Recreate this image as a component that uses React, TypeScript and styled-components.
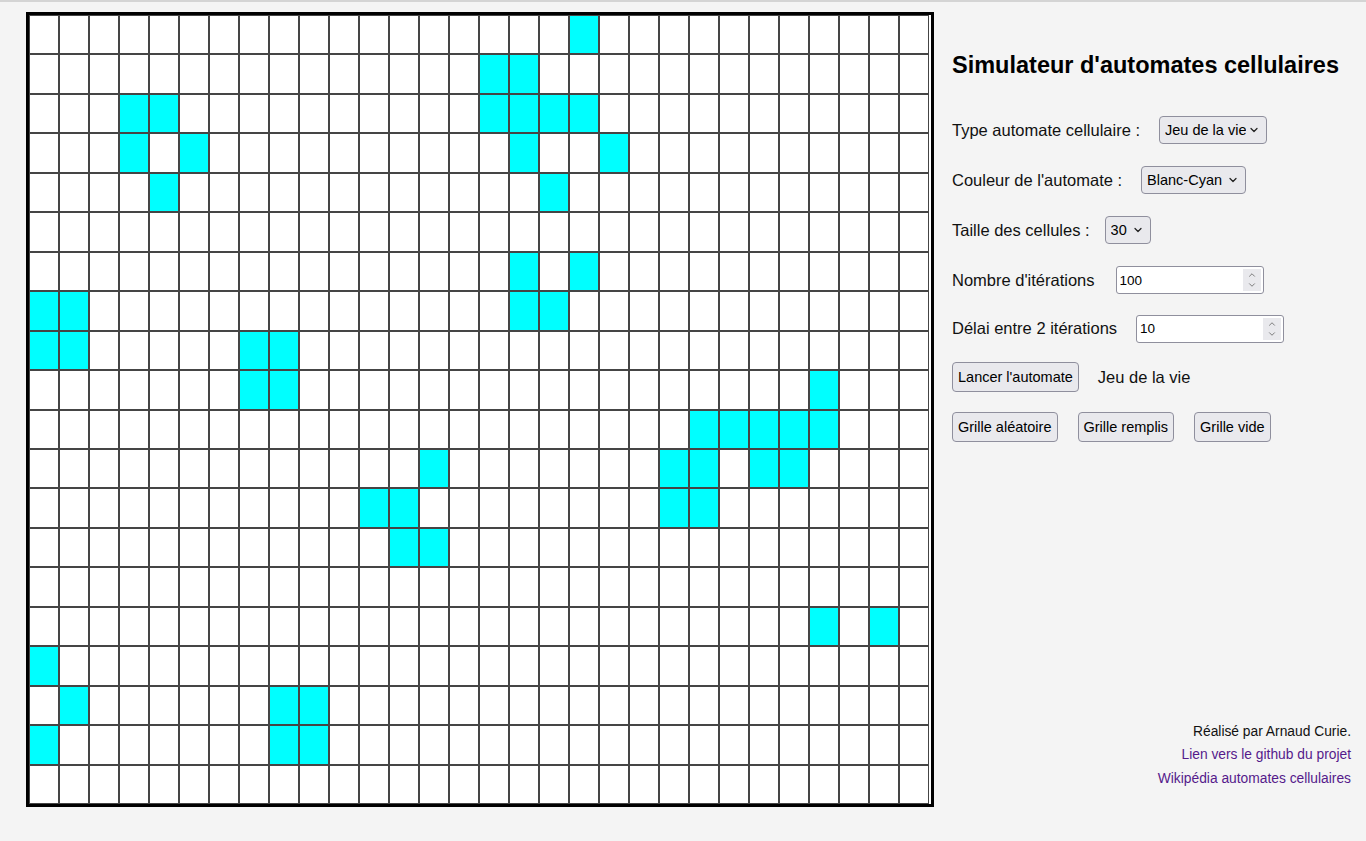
import React from "react";
import styled, { createGlobalStyle } from "styled-components";
import { ChevronDown, ChevronUp } from "lucide-react";

const ROWS = 20;
const COLS = 30;

const alive: [number, number][] = [
  [0, 18],
  [1, 15], [1, 16],
  [2, 3], [2, 4], [2, 15], [2, 16], [2, 17], [2, 18],
  [3, 3], [3, 5], [3, 16], [3, 19],
  [4, 4], [4, 17],
  [6, 16], [6, 18],
  [7, 0], [7, 1], [7, 16], [7, 17],
  [8, 0], [8, 1], [8, 7], [8, 8],
  [9, 7], [9, 8], [9, 26],
  [10, 22], [10, 23], [10, 24], [10, 25], [10, 26],
  [11, 13], [11, 21], [11, 22], [11, 24], [11, 25],
  [12, 11], [12, 12], [12, 21], [12, 22],
  [13, 12], [13, 13],
  [15, 26], [15, 28],
  [16, 0],
  [17, 1], [17, 8], [17, 9],
  [18, 0], [18, 8], [18, 9],
];

const aliveSet = new Set(alive.map(([r, c]) => `${r}-${c}`));

const GlobalStyle = createGlobalStyle`
  html, body {
    margin: 0;
    background: #f4f4f4;
  }
  body {
    border-top: 2px solid #d4d4d4;
    font-family: "Liberation Sans", Arial, sans-serif;
    color: #111;
  }
`;

const App = () => {
  const cells = [];
  for (let r = 0; r < ROWS; r++) {
    for (let c = 0; c < COLS; c++) {
      cells.push(<Cell key={`${r}-${c}`} $alive={aliveSet.has(`${r}-${c}`)} />);
    }
  }

  return (
    <>
      <GlobalStyle />
      <Page>
        <Board>{cells}</Board>
        <Panel>
          <Title>Simulateur d'automates cellulaires</Title>
          <Row>
            <Label>Type automate cellulaire :</Label>
            <SelectWrap>
              <Select defaultValue="vie" $width={108}>
                <option value="vie">Jeu de la vie</option>
              </Select>
              <Chevron size={12} strokeWidth={2.5} />
            </SelectWrap>
          </Row>
          <Row>
            <Label>Couleur de l'automate :</Label>
            <SelectWrap>
              <Select defaultValue="bc" $width={105}>
                <option value="bc">Blanc-Cyan</option>
              </Select>
              <Chevron size={12} strokeWidth={2.5} />
            </SelectWrap>
          </Row>
          <Row $gap={15}>
            <Label>Taille des cellules :</Label>
            <SelectWrap>
              <Select defaultValue="30" $width={46}>
                <option value="30">30</option>
              </Select>
              <Chevron size={12} strokeWidth={2.5} />
            </SelectWrap>
          </Row>
          <Row $gap={21}>
            <Label>Nombre d'itérations</Label>
            <NumberWrap>
              <NumberInput defaultValue="100" />
              <Spinner>
                <ChevronUp size={10} strokeWidth={2} />
                <ChevronDown size={10} strokeWidth={2} />
              </Spinner>
            </NumberWrap>
          </Row>
          <Row $height={47}>
            <Label>Délai entre 2 itérations</Label>
            <NumberWrap>
              <NumberInput defaultValue="10" />
              <Spinner>
                <ChevronUp size={10} strokeWidth={2} />
                <ChevronDown size={10} strokeWidth={2} />
              </Spinner>
            </NumberWrap>
          </Row>
          <Row>
            <Button>Lancer l'automate</Button>
            <Label>Jeu de la vie</Label>
          </Row>
          <Row $gap={20}>
            <Button>Grille aléatoire</Button>
            <Button>Grille remplis</Button>
            <Button>Grille vide</Button>
          </Row>
          <Footer>
            <span>Réalisé par Arnaud Curie.</span>
            <FooterLink href="#">Lien vers le github du projet</FooterLink>
            <FooterLink href="#">Wikipédia automates cellulaires</FooterLink>
          </Footer>
        </Panel>
      </Page>
    </>
  );
};

export default App;

const Page = styled("div")`
  display: flex;
  align-items: flex-start;
  gap: 18px;
  padding: 10px 15px 0 26px;
`;

const Board = styled("div")`
  display: grid;
  grid-template-columns: repeat(${COLS}, 30px);
  grid-template-rows: repeat(${ROWS}, 1fr);
  width: 908px;
  height: 795px;
  box-sizing: border-box;
  border: 3px solid #000;
  background: #fff;
  flex-shrink: 0;
`;

const Cell = styled("div")<{ $alive: boolean }>`
  box-sizing: border-box;
  border: 1px solid #454545;
  background: ${(p) => (p.$alive ? "#00ffff" : "#ffffff")};
`;

const Panel = styled("div")`
  flex: 1;
  min-width: 0;
  display: flex;
  flex-direction: column;
  height: 778px;
`;

const Title = styled("h1")`
  margin: 38px 0 25px;
  font-size: 23.5px;
  line-height: 30px;
  font-weight: 700;
  color: #000;
  white-space: nowrap;
`;

const Row = styled("div")<{ $height?: number; $gap?: number }>`
  display: flex;
  align-items: center;
  gap: ${(p) => p.$gap ?? 19}px;
  height: ${(p) => p.$height ?? 50}px;
`;

const Label = styled("span")`
  font-size: 16.5px;
  white-space: nowrap;
`;

const SelectWrap = styled("div")`
  position: relative;
  display: inline-flex;
`;

const Select = styled("select")<{ $width: number }>`
  appearance: none;
  width: ${(p) => p.$width}px;
  height: 28px;
  padding: 0 20px 0 5px;
  font-family: inherit;
  font-size: 14.5px;
  color: #000;
  background: #e9e9ed;
  border: 1px solid #8f8f9d;
  border-radius: 4px;
`;

const Chevron = styled(ChevronDown)`
  position: absolute;
  right: 7px;
  top: 8px;
  color: #222;
  pointer-events: none;
`;

const NumberWrap = styled("div")`
  position: relative;
  display: inline-flex;
`;

const NumberInput = styled("input")`
  width: 148px;
  height: 28px;
  box-sizing: border-box;
  padding: 0 26px 0 3px;
  font-family: inherit;
  font-size: 13.5px;
  color: #000;
  background: #fff;
  border: 1px solid #8f8f9d;
  border-radius: 3px;
`;

const Spinner = styled("div")`
  position: absolute;
  right: 3px;
  top: 3px;
  bottom: 3px;
  width: 18px;
  display: flex;
  flex-direction: column;
  align-items: center;
  justify-content: center;
  background: #e9e9ed;
  color: #666;
`;

const Button = styled("button")`
  height: 30px;
  padding: 0 5px;
  font-family: inherit;
  font-size: 14.5px;
  color: #000;
  background: #e9e9ed;
  border: 1px solid #8f8f9d;
  border-radius: 4px;
`;

const Footer = styled("div")`
  margin-top: auto;
  display: flex;
  flex-direction: column;
  align-items: flex-end;
  font-size: 13.8px;
  line-height: 23.5px;
`;

const FooterLink = styled("a")`
  color: #551a8b;
  text-decoration: none;
`;
